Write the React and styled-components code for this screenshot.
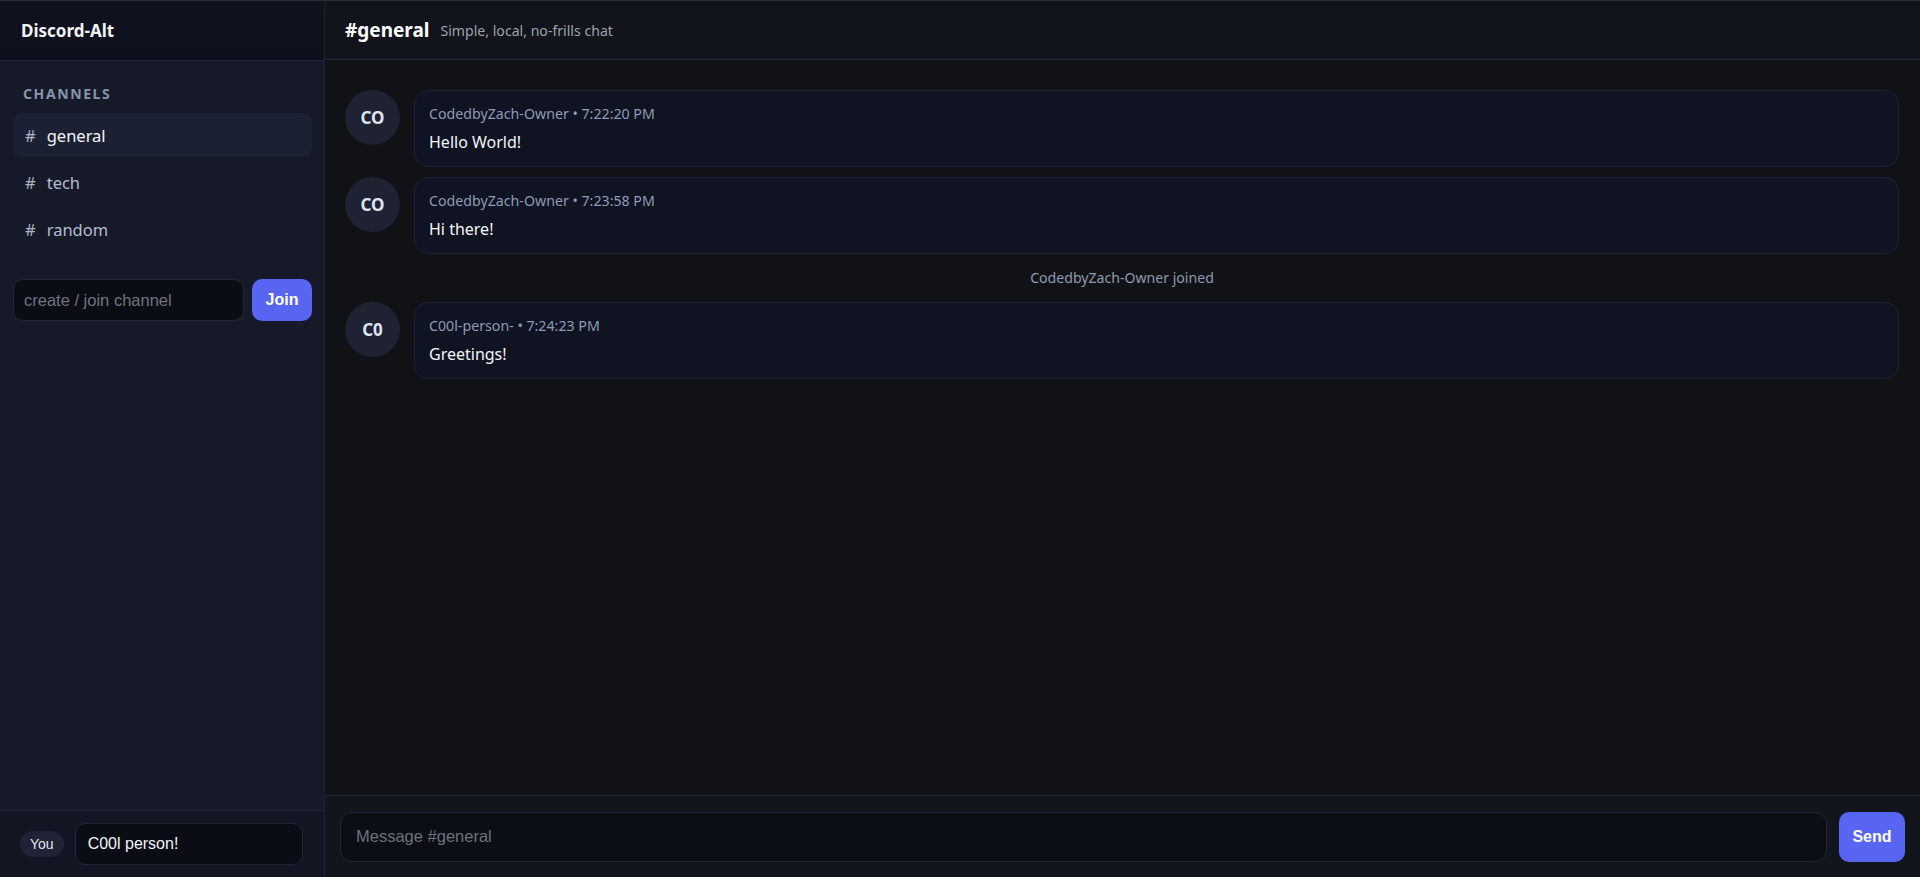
import React, { useState } from "react";
import styled, { createGlobalStyle } from "styled-components";

const GlobalStyle = createGlobalStyle`
    html, body, #root {
        margin: 0;
        height: 100%;
    }
    body {
        background: #111216;
        font-family: 'Noto Sans', 'Open Sans', sans-serif;
        color: #e6e9f0;
    }
    * {
        box-sizing: border-box;
    }
`;

const channels = ["general", "tech", "random"];

const messages = [
    { id: 1, type: "msg", user: "CodedbyZach-Owner", initials: "CO", time: "7:22:20 PM", text: "Hello World!" },
    { id: 2, type: "msg", user: "CodedbyZach-Owner", initials: "CO", time: "7:23:58 PM", text: "Hi there!" },
    { id: 3, type: "system", text: "CodedbyZach-Owner joined" },
    { id: 4, type: "msg", user: "C00l-person-", initials: "C0", time: "7:24:23 PM", text: "Greetings!" },
];

export default function App() {
    const [active] = useState("general");

    return (
        <>
            <GlobalStyle />
            <Layout>
                <Sidebar>
                    <Brand>Discord-Alt</Brand>
                    <SidebarBody>
                        <SectionLabel>Channels</SectionLabel>
                        <ChannelList>
                            {channels.map((c) => (
                                <ChannelItem key={c} $active={c === active}>
                                    <span className="hash">#</span>
                                    {c}
                                </ChannelItem>
                            ))}
                        </ChannelList>
                        <JoinRow>
                            <DarkInput placeholder="create / join channel" />
                            <PrimaryButton $w="60px" $h="42px">Join</PrimaryButton>
                        </JoinRow>
                    </SidebarBody>
                    <UserBar>
                        <YouPill>You</YouPill>
                        <DarkInput defaultValue="C00l person!" />
                    </UserBar>
                </Sidebar>

                <Main>
                    <TopBar>
                        <ChannelTitle>#{active}</ChannelTitle>
                        <ChannelTopic>Simple, local, no-frills chat</ChannelTopic>
                    </TopBar>

                    <MessageList>
                        {messages.map((m) =>
                            m.type === "system" ? (
                                <SystemLine key={m.id}>{m.text}</SystemLine>
                            ) : (
                                <MessageRow key={m.id}>
                                    <Avatar>{m.initials}</Avatar>
                                    <Bubble>
                                        <Meta>{m.user} • {m.time}</Meta>
                                        <Body>{m.text}</Body>
                                    </Bubble>
                                </MessageRow>
                            )
                        )}
                    </MessageList>

                    <Composer>
                        <ComposerInput placeholder={`Message #${active}`} />
                        <PrimaryButton $w="66px" $h="50px">Send</PrimaryButton>
                    </Composer>
                </Main>
            </Layout>
        </>
    );
}

const Layout = styled.div`
    display: flex;
    height: 100vh;
    border-top: 1px solid #2b2d34;
    overflow: hidden;
`;

const Sidebar = styled.aside`
    width: 325px;
    flex-shrink: 0;
    display: flex;
    flex-direction: column;
    background: #161a28;
    border-right: 1px solid #1f2331;
`;

const Brand = styled.div`
    height: 60px;
    flex-shrink: 0;
    display: flex;
    align-items: center;
    padding: 0 21px;
    font-size: 17px;
    font-weight: 700;
    color: #f1f3f8;
    background: linear-gradient(180deg, #10131f 0%, #0e111c 100%);
    border-bottom: 1px solid #222636;
`;

const SidebarBody = styled.div`
    flex: 1;
    padding: 23px 12px 0 13px;
`;

const SectionLabel = styled.div`
    padding-left: 10px;
    font-size: 14px;
    line-height: 19px;
    font-weight: 700;
    letter-spacing: 1.6px;
    text-transform: uppercase;
    color: #8794ad;
    margin-bottom: 10px;
`;

const ChannelList = styled.div`
    display: flex;
    flex-direction: column;
    gap: 3px;
`;

const ChannelItem = styled.div`
    height: 44px;
    display: flex;
    align-items: center;
    padding: 0 12px;
    border-radius: 9px;
    font-size: 16.5px;
    color: ${(p) => (p.$active ? "#f3f5fa" : "#b3bccf")};
    background: ${(p) => (p.$active ? "#1c2033" : "transparent")};
    cursor: pointer;

    .hash {
        color: #aab3c7;
        margin-right: 11px;
    }
`;

const JoinRow = styled.div`
    display: flex;
    gap: 8px;
    margin-top: 28px;
`;

const DarkInput = styled.input`
    flex: 1;
    min-width: 0;
    height: 42px;
    padding: 0 10px;
    background: #0b0d16;
    border: 1px solid #22263a;
    border-radius: 10px;
    font-family: 'Liberation Sans', Arial, sans-serif;
    font-size: 16.5px;
    color: #f2f4f8;
    outline: none;

    &::placeholder {
        color: #6f747f;
    }
`;

const PrimaryButton = styled.button`
    width: ${(p) => p.$w};
    height: ${(p) => p.$h};
    flex-shrink: 0;
    border: none;
    border-radius: 10px;
    background: #5865f2;
    color: #ffffff;
    font-family: 'Liberation Sans', Arial, sans-serif;
    font-size: 16px;
    font-weight: 700;
    cursor: pointer;
`;

const UserBar = styled.div`
    height: 67px;
    flex-shrink: 0;
    display: flex;
    align-items: center;
    gap: 11px;
    padding: 0 21px 0 20px;
    background: #131622;
    border-top: 1px solid #21253a;

    ${DarkInput} {
        padding: 0 12px;
        font-size: 16px;
    }
`;

const YouPill = styled.span`
    height: 26px;
    padding: 0 10px;
    display: flex;
    align-items: center;
    border-radius: 13px;
    background: #1f2335;
    font-family: 'Liberation Sans', Arial, sans-serif;
    font-size: 14px;
    color: #e2e6ef;
`;

const Main = styled.main`
    flex: 1;
    display: flex;
    flex-direction: column;
    min-width: 0;
    background: #111216;
`;

const TopBar = styled.header`
    height: 59px;
    flex-shrink: 0;
    display: flex;
    align-items: center;
    gap: 11px;
    padding: 0 20px;
    background: #12141b;
    border-bottom: 1px solid #23263a;
`;

const ChannelTitle = styled.h1`
    margin: 0;
    font-size: 19px;
    font-weight: 700;
    color: #ffffff;
`;

const ChannelTopic = styled.span`
    font-size: 14.1px;
    color: #9aa2b3;
`;

const MessageList = styled.div`
    flex: 1;
    overflow-y: auto;
    padding: 30px 21px 20px 20px;
    display: flex;
    flex-direction: column;
    gap: 10px;
`;

const MessageRow = styled.div`
    display: flex;
    align-items: flex-start;
    gap: 14px;
`;

const Avatar = styled.div`
    width: 55px;
    height: 55px;
    flex-shrink: 0;
    border-radius: 50%;
    background: #1e2233;
    display: flex;
    align-items: center;
    justify-content: center;
    font-size: 17px;
    font-weight: 700;
    color: #dfe4ef;
`;

const Bubble = styled.div`
    flex: 1;
    display: flex;
    flex-direction: column;
    gap: 6px;
    padding: 13px 14px 12px;
    background: #0f1322;
    border: 1px solid #1e2234;
    border-radius: 14px;
`;

const Meta = styled.div`
    font-size: 14.2px;
    line-height: 20px;
    color: #8e9bb5;
`;

const Body = styled.div`
    font-size: 16px;
    line-height: 24px;
    color: #f4f6fa;
`;

const SystemLine = styled.div`
    text-align: center;
    font-size: 14.1px;
    line-height: 28px;
    color: #8d9ab0;
`;

const Composer = styled.div`
    height: 82px;
    flex-shrink: 0;
    display: flex;
    align-items: center;
    gap: 12px;
    padding: 0 15px;
    background: #13151d;
    border-top: 1px solid #22253a;
`;

const ComposerInput = styled.input`
    flex: 1;
    height: 50px;
    padding: 0 15px;
    background: #0c0e16;
    border: 1px solid #23263a;
    border-radius: 12px;
    font-family: 'Liberation Sans', Arial, sans-serif;
    font-size: 16.5px;
    color: #f2f4f8;
    outline: none;

    &::placeholder {
        color: #6c717c;
    }
`;
